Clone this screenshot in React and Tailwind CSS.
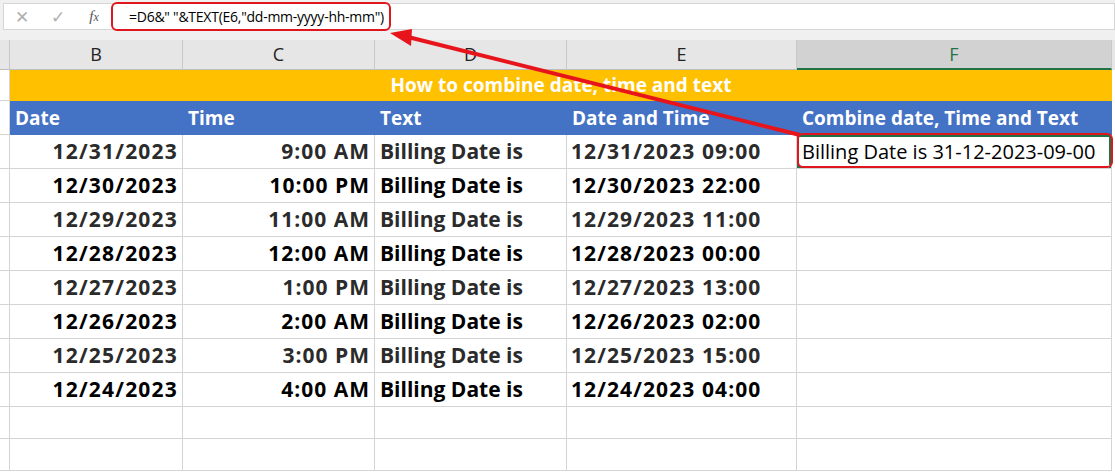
import React from 'react'

const rows = [
  ['12/31/2023', '9:00 AM', 'Billing Date is', '12/31/2023 09:00', 'Billing Date is 31-12-2023-09-00'],
  ['12/30/2023', '10:00 PM', 'Billing Date is', '12/30/2023 22:00', ''],
  ['12/29/2023', '11:00 AM', 'Billing Date is', '12/29/2023 11:00', ''],
  ['12/28/2023', '12:00 AM', 'Billing Date is', '12/28/2023 00:00', ''],
  ['12/27/2023', '1:00 PM', 'Billing Date is', '12/27/2023 13:00', ''],
  ['12/26/2023', '2:00 AM', 'Billing Date is', '12/26/2023 02:00', ''],
  ['12/25/2023', '3:00 PM', 'Billing Date is', '12/25/2023 15:00', ''],
  ['12/24/2023', '4:00 AM', 'Billing Date is', '12/24/2023 04:00', ''],
]

const cols = ['B', 'C', 'D', 'E', 'F']
const heads = ['Date', 'Time', 'Text', 'Date and Time', 'Combine date, Time and Text']
const gridCols = 'grid grid-cols-[10px_173px_192px_192px_230px_315px]'
const cell = 'border-r border-b border-[#d4d4d4] flex items-center overflow-hidden whitespace-nowrap'

const App = () => {
  return (
    <div className="relative w-[1115px] h-[476px] overflow-hidden bg-white font-['Open_Sans',sans-serif]">
      {/* Formula bar */}
      <div className="h-[40px] bg-[#f0f0f0] pt-[3px] pl-[3px]">
        <div className="h-[27px] bg-white border border-[#d6d6d6] flex items-center">
          <div className="w-[108px] flex items-center text-[#b0b0b0] text-[17px]">
            <span className="w-[36px] text-center">✕</span>
            <span className="w-[36px] text-center">✓</span>
            <span className="w-[36px] text-center text-[#555] italic font-['Liberation_Serif',serif] text-[15px]">
              f<span className="text-[12px]">x</span>
            </span>
          </div>
          <div className="pl-[17px] text-[14px] text-black tracking-[-0.25px]">=D6&amp;" "&amp;TEXT(E6,"dd-mm-yyyy-hh-mm")</div>
        </div>
      </div>

      {/* Column headers */}
      <div className={`${gridCols} h-[30px] bg-[#e6e6e6]`}>
        <div className="border-r border-[#c8c8c8] border-b border-b-[#bdbdbd]" />
        {cols.map((c) => (
          <div
            key={c}
            className={
              c === 'F'
                ? 'flex items-center justify-center bg-[#d2d2d2] text-[#217346] text-[18px] border-r border-[#c8c8c8] border-b-2 border-b-[#217346]'
                : 'flex items-center justify-center text-[#222] text-[18px] border-r border-[#c8c8c8] border-b border-b-[#bdbdbd]'
            }
          >
            {c}
          </div>
        ))}
      </div>

      {/* Title row */}
      <div className={`${gridCols} h-[31px]`}>
        <div className="border-r border-b border-[#d4d4d4]" />
        <div className="col-span-5 bg-[#ffc000] flex items-center justify-center text-white font-bold text-[19px]">
          How to combine date, time and text
        </div>
      </div>

      {/* Header row */}
      <div className={`${gridCols} h-[34px]`}>
        <div className="border-r border-b border-[#d4d4d4]" />
        {heads.map((h) => (
          <div key={h} className="bg-[#4472c4] flex items-center pl-[5px] text-white font-bold text-[19px] whitespace-nowrap">
            {h}
          </div>
        ))}
      </div>

      {/* Data rows */}
      {rows.map((r, i) => (
        <div key={i} className={`${gridCols} h-[34px] ${i % 2 === 0 ? 'text-[#2b2b2b]' : 'text-black'}`}>
          <div className="border-r border-b border-[#d4d4d4]" />
          <div className={`${cell} justify-end pr-[4px] font-bold text-[21px] tracking-[1.2px]`}>{r[0]}</div>
          <div className={`${cell} justify-end pr-[4px] font-bold text-[21px] tracking-[1px]`}>{r[1]}</div>
          <div className={`${cell} pl-[5px] font-bold text-[21px]`}>{r[2]}</div>
          <div className={`${cell} pl-[4px] font-bold text-[21px] tracking-[1.1px]`}>{r[3]}</div>
          <div className={`${cell} relative pl-[5px] text-[20px] text-black`}>
            {r[4]}
            {i === 0 && (
              <>
                <div className="absolute inset-0 border-2 border-[#217346]" />
                <div className="absolute right-[-3px] bottom-[-3px] w-[6px] h-[6px] bg-[#217346] border border-white" />
              </>
            )}
          </div>
        </div>
      ))}

      {/* Empty rows */}
      {[0, 1].map((k) => (
        <div key={k} className={`${gridCols} h-[32px]`}>
          {[0, 1, 2, 3, 4, 5].map((j) => (
            <div key={j} className="border-r border-b border-[#d4d4d4]" />
          ))}
        </div>
      ))}

      {/* Annotations */}
      <div className="absolute left-[111px] top-[2px] w-[280px] h-[29px] rounded-[6px] border-2 border-[#e0161e]" />
      <div className="absolute left-[797px] top-[133px] w-[316px] h-[35px] rounded-[6px] border-2 border-[#e0161e]" />
      <svg className="absolute left-0 top-0" width="1115" height="476">
        <line x1="408" y1="37" x2="800" y2="135" stroke="#e8141b" strokeWidth="4" />
        <polygon points="390,33 412,29 411,46" fill="#e8141b" />
      </svg>
    </div>
  )
}

export default App
